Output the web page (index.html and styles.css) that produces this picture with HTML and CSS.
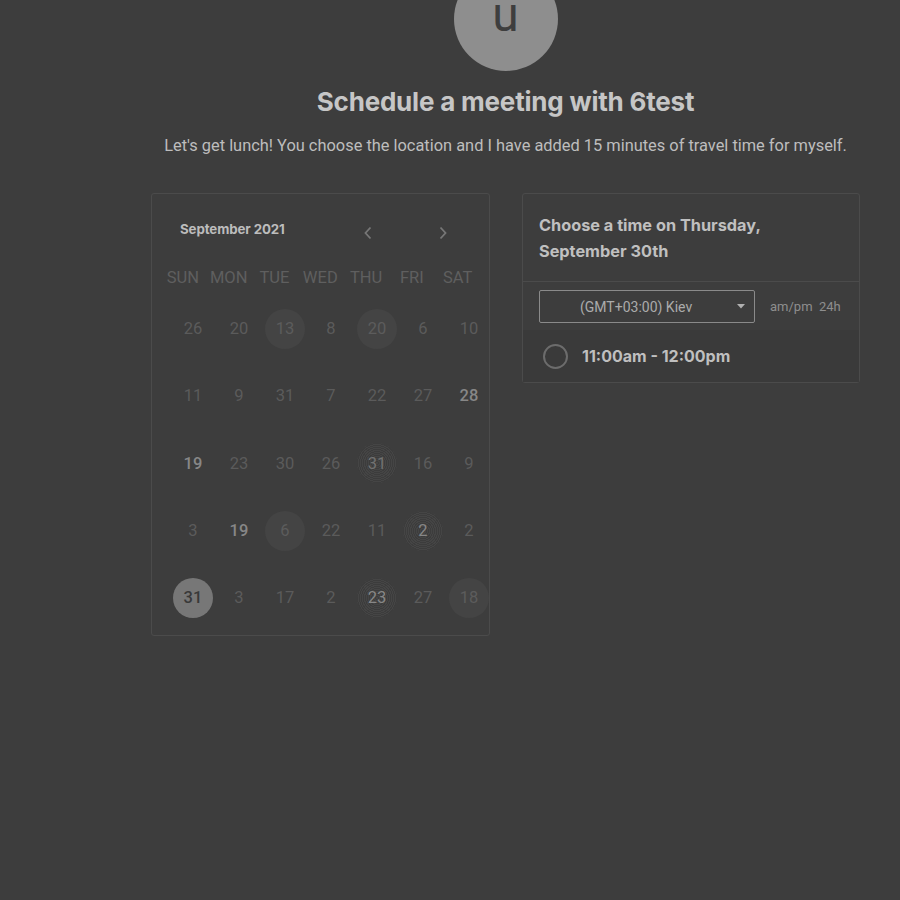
FILE: index.html
```html
<!DOCTYPE html>
<html>
<head>
<meta charset="utf-8">
<link rel="stylesheet" href="styles.css">
</head>
<body>
<div class="page">
  <div class="avatar">u</div>
  <h1 class="title">Schedule a meeting with 6test</h1>
  <p class="subtitle">Let's get lunch! You choose the location and I have added 15 minutes of travel time for myself.</p>
  <div class="cards">
    <div class="card calendar">
      <div class="cal-head">
        <span class="month">September 2021</span>
        <span class="arrows">
          <svg class="chev" width="10" height="14" viewBox="0 0 10 14"><path d="M7.5 1.5 L2.5 7 L7.5 12.5" fill="none" stroke="currentColor" stroke-width="1.8"/></svg>
          <svg class="chev" width="10" height="14" viewBox="0 0 10 14"><path d="M2.5 1.5 L7.5 7 L2.5 12.5" fill="none" stroke="currentColor" stroke-width="1.8"/></svg>
        </span>
      </div>
      <div class="weekdays">
        <span>SUN</span><span>MON</span><span>TUE</span><span>WED</span><span>THU</span><span>FRI</span><span>SAT</span>
      </div>
      <div class="days">
        <span class="d">26</span><span class="d">20</span><span class="d fill">13</span><span class="d">8</span><span class="d fill">20</span><span class="d">6</span><span class="d">10</span>
        <span class="d">11</span><span class="d">9</span><span class="d">31</span><span class="d">7</span><span class="d">22</span><span class="d">27</span><span class="d bright">28</span>
        <span class="d bright">19</span><span class="d">23</span><span class="d">30</span><span class="d">26</span><span class="d tex">31</span><span class="d">16</span><span class="d">9</span>
        <span class="d">3</span><span class="d bright">19</span><span class="d fill">6</span><span class="d">22</span><span class="d">11</span><span class="d tex lite">2</span><span class="d">2</span>
        <span class="d sel">31</span><span class="d">3</span><span class="d">17</span><span class="d">2</span><span class="d tex lite">23</span><span class="d">27</span><span class="d fill">18</span>
      </div>
    </div>
    <div class="card times">
      <div class="times-head">Choose a time on Thursday,<br>September 30th</div>
      <div class="tz-row">
        <div class="tz-select">
          <span>(GMT+03:00) Kiev</span>
          <svg width="8" height="5" viewBox="0 0 8 5"><path d="M0 0 L8 0 L4 4.5 Z" fill="#b0b0b0"/></svg>
        </div>
        <span class="fmt">am/pm&nbsp; 24h</span>
      </div>
      <div class="slot">
        <span class="radio"></span>
        <span class="slot-text">11:00am - 12:00pm</span>
      </div>
    </div>
  </div>
</div>
</body>
</html>
```

FILE: styles.css
```css
html, body {
  margin: 0;
  padding: 0;
  background: #3d3d3d;
  height: 100%;
  overflow: hidden;
}

.page {
  margin-left: 151px;
  width: 709px;
  display: flex;
  flex-direction: column;
  align-items: center;
  font-family: Roboto, "Liberation Sans", sans-serif;
}

.avatar {
  width: 104px;
  height: 104px;
  margin-top: -33px;
  border-radius: 50%;
  background: #8e8e8e;
  color: #3e3e3e;
  font-family: Roboto, sans-serif;
  font-size: 48px;
  line-height: 96px;
  text-align: center;
}

.title {
  margin: 16px 0 0;
  font-family: Inter, "Liberation Sans", sans-serif;
  font-weight: 700;
  font-size: 26px;
  line-height: 30px;
  color: #c6c6c6;
  letter-spacing: -0.2px;
}

.subtitle {
  margin: 20px 0 0;
  font-size: 16.4px;
  line-height: 18px;
  color: #bdbdbd;
  white-space: nowrap;
}

.cards {
  margin-top: 38px;
  width: 100%;
  display: flex;
  gap: 32px;
  align-items: flex-start;
}

.card {
  border: 1px solid #4b4b4b;
  border-radius: 3px;
  box-sizing: border-box;
}

.calendar {
  width: 339px;
  height: 443px;
  padding-top: 25px;
}

.cal-head {
  display: flex;
  align-items: center;
  padding-left: 28px;
  height: 20px;
}

.month {
  font-family: Inter, sans-serif;
  font-weight: 700;
  font-size: 13.3px;
  color: #bcbcbc;
  letter-spacing: -0.1px;
}

.arrows {
  display: flex;
  gap: 65px;
  margin-left: 78px;
  margin-top: 8px;
  color: #777;
}

.weekdays {
  display: grid;
  grid-template-columns: repeat(7, 45.8px);
  margin-left: 8px;
  margin-top: 30px;
  font-size: 16.5px;
  color: #5f5f5f;
  text-align: center;
  line-height: 18px;
}

.days {
  display: grid;
  grid-template-columns: repeat(7, 46px);
  grid-auto-rows: 67.3px;
  margin-left: 18px;
  margin-top: 8px;
}

.d {
  justify-self: center;
  align-self: center;
  width: 40px;
  height: 40px;
  border-radius: 50%;
  display: flex;
  align-items: center;
  justify-content: center;
  font-size: 16.5px;
  color: #5b5b5b;
}

.d.bright {
  color: #878787;
  font-weight: 500;
}

.d.fill {
  background: #444444;
  color: #5c5c5c;
}

.d.tex {
  background: repeating-radial-gradient(circle at 50% 50%, #454545 0 1px, #3c3c3c 1px 2px);
  color: #727272;
}

.d.tex.lite {
  color: #878787;
}

.d.sel {
  background: #777777;
  color: #393939;
  font-weight: 500;
}

.times {
  width: 338px;
}

.times-head {
  padding: 18px 16px 17px;
  font-family: Inter, sans-serif;
  font-weight: 700;
  font-size: 16.3px;
  line-height: 26px;
  color: #c0c0c0;
  border-bottom: 1px solid #4b4b4b;
}

.tz-row {
  display: flex;
  align-items: center;
  padding: 8px 16px 7px;
}

.tz-select {
  width: 216px;
  height: 33px;
  box-sizing: border-box;
  border: 1px solid #8a8a8a;
  border-radius: 2px;
  display: flex;
  align-items: center;
  justify-content: space-between;
  padding: 0 9px 0 40px;
  font-size: 14px;
  color: #ababab;
}

.fmt {
  margin-left: 15px;
  font-size: 13px;
  color: #8e8e8e;
}

.slot {
  background: #3a3a3a;
  display: flex;
  align-items: center;
  height: 52px;
  padding-left: 20px;
}

.radio {
  width: 21px;
  height: 21px;
  border: 2px solid #6c6c6c;
  border-radius: 50%;
}

.slot-text {
  margin-left: 14px;
  font-family: Inter, sans-serif;
  font-weight: 700;
  font-size: 16px;
  color: #bfbfbf;
}
```
